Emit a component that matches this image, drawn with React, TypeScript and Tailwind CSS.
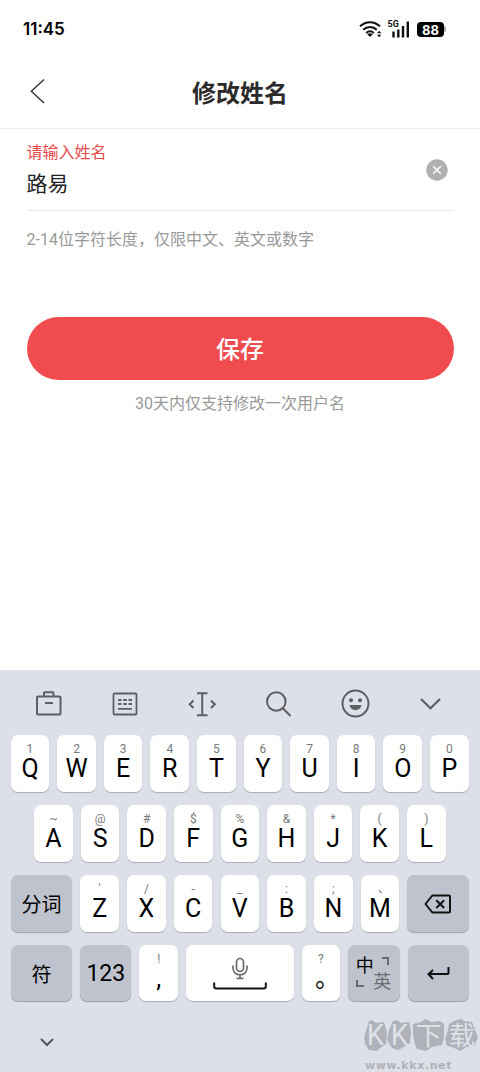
import type { ReactNode } from "react";

const letterRows = [
  [
    ["Q", "1"],
    ["W", "2"],
    ["E", "3"],
    ["R", "4"],
    ["T", "5"],
    ["Y", "6"],
    ["U", "7"],
    ["I", "8"],
    ["O", "9"],
    ["P", "0"],
  ],
  [
    ["A", "~"],
    ["S", "@"],
    ["D", "#"],
    ["F", "$"],
    ["G", "%"],
    ["H", "&"],
    ["J", "*"],
    ["K", "("],
    ["L", ")"],
  ],
  [
    ["Z", "'"],
    ["X", "/"],
    ["C", "-"],
    ["V", "_"],
    ["B", ":"],
    ["N", ";"],
    ["M", "、"],
  ],
];

function LetterKey({ main, sub }: { main: string; sub: string }) {
  return (
    <button className="flex h-[56.4px] w-[38.6px] shrink-0 flex-col items-center rounded-[7px] bg-white pt-[8px] shadow-[0_1px_1px_#a9acb8]">
      <span
        className={`h-3 text-[12px] leading-[12px] text-[#77787b] ${
          sub === "、" ? "pl-2" : ""
        }`}
      >
        {sub}
      </span>
      <span className="text-[25px] leading-[27px] text-black">{main}</span>
    </button>
  );
}

function FunctionKey({
  className,
  children,
}: {
  className: string;
  children: ReactNode;
}) {
  return (
    <button
      className={`flex h-[56.4px] shrink-0 items-center justify-center rounded-[7px] bg-[#bfc3cd] text-black shadow-[0_1px_1px_#9c9fb0] ${className}`}
    >
      {children}
    </button>
  );
}

function StatusBar() {
  return (
    <div className="flex h-14 items-center justify-between pt-[2px] pr-[34px] pl-[23px]">
      <span className="pt-px font-['Inter'] text-[17px] font-semibold text-black">
        11:45
      </span>
      <div className="flex items-center">
        <svg className="h-[18px] w-6" viewBox="0 0 24 18" fill="none">
          <g stroke="#111" strokeWidth="2">
            <path d="M1 6.3C7 .8 15 .8 21 6.3" />
            <path d="M4.2 9.7c4-3.7 9.6-3.7 13.6 0" />
            <path d="M7.2 12.9c2.3-2 5.3-2 7.6 0" />
          </g>
          <path d="M8.2 14.2c1.8-1.4 3.8-1.4 5.6 0L11 17z" fill="#111" />
          <path d="M18 13.2l2.2-2.4 2.2 2.4zM18 14.8l2.2 2.4 2.2-2.4z" fill="#111" />
        </svg>
        <svg className="-mt-px ml-[5px] h-[18px] w-[22px] overflow-visible" viewBox="0 0 22 18">
          <text
            x="-0.5"
            y="7"
            fontFamily="Roboto"
            fontSize="9"
            fontWeight="700"
            fill="#111"
          >
            5G
          </text>
          <path
            d="M5.5 11.5v6M10.3 9.5v8M15 6v11.5M19.8 1.5v16"
            stroke="#111"
            strokeWidth="2.4"
          />
        </svg>
        <div className="ml-[7px] flex h-[15px] w-[27px] items-center justify-center rounded-[4px] bg-black pt-px font-['Inter'] text-[13px] leading-[14px] font-bold text-white">
          88
        </div>
        <div className="h-[6px] w-[2px] rounded-r-full bg-[#aaa]" />
      </div>
    </div>
  );
}

function Toolbar() {
  return (
    <div className="flex h-[65.4px] items-center justify-between px-[34px] pt-[3px]">
      <svg className="size-[30px]" viewBox="0 0 30 30" fill="none" stroke="#5d5f63" strokeWidth="2">
        <rect x="3" y="7.5" width="23.5" height="18" rx="1" />
        <path d="M10 7V4.2q0-1 1-1h7.5q1 0 1 1V7M11 14h8" />
      </svg>
      <svg className="size-[30px]" viewBox="0 0 30 30" fill="none" stroke="#5d5f63" strokeWidth="1.8">
        <rect x="3.5" y="4.5" width="23" height="21" rx="1" />
        <path d="M8 11h3.5M13.3 11h3.5M18.5 11H22M8 15h3.5M13.3 15h3.5M18.5 15H22M8 19.8h14" />
      </svg>
      <svg className="size-[30px]" viewBox="0 0 30 30" fill="none" stroke="#5d5f63" strokeWidth="2">
        <path d="M10 4.2h10.5M10 26.2h10.5M15.25 4v22" />
        <path d="M6.5 11.5L2.7 15.3 6.5 19M24 11.5l3.800 3.800L24 19" />
      </svg>
      <svg className="size-[30px]" viewBox="0 0 30 30" fill="none" stroke="#5d5f63" strokeWidth="2">
        <circle cx="13.3" cy="12.5" r="9.3" />
        <path d="M19.8 19.3l7.7 7.7" />
      </svg>
      <svg className="size-[30px]" viewBox="0 0 30 30" fill="none">
        <circle cx="15.5" cy="14.6" r="13" stroke="#5d5f63" strokeWidth="2" />
        <g fill="#5d5f63">
          <circle cx="11" cy="11.3" r="2" />
          <circle cx="20" cy="11.3" r="2" />
          <path d="M9.5 16h12c-.5 3.3-3 5.2-6 5.2S10 19.3 9.5 16z" />
        </g>
      </svg>
      <svg className="size-[30px]" viewBox="0 0 30 30" fill="none" stroke="#5d5f63" strokeWidth="2.2">
        <path d="M5 10l9.500 9.300L24 10" />
      </svg>
    </div>
  );
}

function Keyboard() {
  return (
    <div className="relative h-[402px] bg-[#dde0e8]">
      <Toolbar />
      <div className="flex flex-col gap-[13.5px] pr-[11px] pl-[10.7px]">
        <div className="flex gap-2">
          {letterRows[0].map(([main, sub]) => (
            <LetterKey key={main} main={main} sub={sub} />
          ))}
        </div>
        <div className="flex justify-center gap-2">
          {letterRows[1].map(([main, sub]) => (
            <LetterKey key={main} main={main} sub={sub} />
          ))}
        </div>
        <div className="flex justify-between">
          <FunctionKey className="w-[61.5px] pt-[3px] text-[20px]">分词</FunctionKey>
          {letterRows[2].map(([main, sub]) => (
            <LetterKey key={main} main={main} sub={sub} />
          ))}
          <FunctionKey className="w-[61.5px] pt-px">
            <svg className="h-5 w-7" viewBox="0 0 28 20" fill="none" stroke="#111" strokeWidth="2">
              <path d="M8.3 1.5H25q1 0 1 1v15q0 1-1 1H8.3L1.5 10z" strokeLinejoin="round" />
              <path d="M12.300 6.200l7.800 7.800M20.100 6.200L12.300 14" />
            </svg>
          </FunctionKey>
        </div>
        <div className="flex gap-2">
          <FunctionKey className="w-[61.5px] pt-[3px] text-[20px]">符</FunctionKey>
          <FunctionKey className="w-[51.3px] pt-[2px] text-[23px]">123</FunctionKey>
          <LetterKey main="," sub="!" />
          <button className="flex h-[56.4px] flex-1 flex-col items-center rounded-[7px] bg-white pt-[11.5px] shadow-[0_1px_1px_#a9acb8]">
            <svg className="h-[34px] w-[54px]" viewBox="0 0 54 34" fill="none">
              <g stroke="#6a6b6e" strokeWidth="1.7">
                <rect x="23.5" y="1.5" width="7" height="13" rx="3.5" />
                <path d="M20 8.5v2.500c0 9 14 9 14 0V8.500M27 18v3.500M23.500 21.300h7" />
              </g>
              <path d="M1.200 25.500v4q0 2 2 2h47.600q2 0 2-2v-4" stroke="#111" strokeWidth="2" />
            </svg>
          </button>
          <button className="flex h-[56.4px] w-[38.6px] shrink-0 flex-col items-center rounded-[7px] bg-white pt-[8px] shadow-[0_1px_1px_#a9acb8]">
            <span className="h-3 text-[12px] leading-[12px] text-[#77787b]">?</span>
            <span className="pl-[13px] text-[25px] leading-[27px] text-black">。</span>
          </button>
          <FunctionKey className="w-[51.3px] pt-[2px]">
            <span className="grid w-[36px] grid-cols-2 grid-rows-2 text-[18px] leading-[16px]">
              <span>中</span>
              <svg className="-mt-px ml-2 size-2" viewBox="0 0 8 8" fill="none" stroke="#696c73" strokeWidth="2">
                <path d="M0 1h6v7" />
              </svg>
              <svg className="mt-[6px] size-2" viewBox="0 0 8 8" fill="none" stroke="#696c73" strokeWidth="2">
                <path d="M1 0v6h7" />
              </svg>
              <span className="-ml-px text-[#696c73]">英</span>
            </span>
          </FunctionKey>
          <FunctionKey className="w-[61.5px]">
            <svg className="h-4 w-6" viewBox="0 0 24 16" fill="none" stroke="#111" strokeWidth="2">
              <path d="M22.500 2v6q0 1-1 1H2M7 5L2.500 9 7 14" />
            </svg>
          </FunctionKey>
        </div>
      </div>
      <svg className="mt-[37px] ml-[40px] h-[9px] w-[14px]" viewBox="0 0 14 9" fill="none" stroke="#55575b" strokeWidth="2">
        <path d="M1 1l6 6 6-6" />
      </svg>
      <Watermark />
    </div>
  );
}

function Watermark() {
  return (
    <svg className="absolute right-0 bottom-0 h-[55px] w-[118px] overflow-visible" viewBox="0 0 118 55">
      <g fill="#b0b2b9">
        <path d="M7 4l3-1 4 3 8-1 3 10-1 12-6 4-3 3-8-1-4-6-1-7 2-6z" />
        <path d="M31 4l4-1 4 3 8-1 2 9-1 12-8 5-4 2-6-2-5-8 2-10z" />
        <path d="M51 7l8-2 5-3 5 3 9-1 4 3v13l-2 8-10 2-6 4-9-2-2-5-2-9z" />
        <path d="M87 7l7-4 5-1 4 2 7 1 4 10 2 6-4 8-8 1-5 4-9-4-5-1-2-7 3-9z" />
      </g>
      <g fill="#dfe1e8" fontFamily="Roboto, 'Noto Sans CJK SC', sans-serif">
        <text x="5" y="28" fontSize="29" textLength="17" lengthAdjust="spacingAndGlyphs">K</text>
        <text x="29" y="28" fontSize="29" textLength="17" lengthAdjust="spacingAndGlyphs">K</text>
        <text x="53.5" y="28" fontSize="26">下</text>
        <text x="87" y="27.5" fontSize="26">载</text>
      </g>
      <text
        x="3"
        y="52"
        fontFamily="'DejaVu Sans'"
        fontSize="11"
        fontWeight="700"
        letterSpacing="0.6"
        fill="#b0b2b9"
      >
        www.kkx.net
      </text>
    </svg>
  );
}

export default function App() {
  return (
    <div className="flex h-[1072px] w-[480px] flex-col overflow-hidden bg-white font-['Roboto','Noto_Sans_CJK_SC',sans-serif]">
      <StatusBar />
      <header className="grid h-[73px] grid-cols-[1fr_auto_1fr] items-center border-b border-[#ececec] px-[30px]">
        <button>
          <svg className="-mt-[2px] h-[26px] w-[15px]" viewBox="0 0 15 26" fill="none" stroke="#333" strokeWidth="1.4">
            <path d="M14 1.5L1.3 13.3 14 25" />
          </svg>
        </button>
        <h1 className="pt-[3px] text-[24px] font-bold text-[#2b2b2b]">修改姓名</h1>
      </header>

      <main className="flex-1 px-[26.5px]">
        <div className="flex h-[82px] items-center justify-between border-b border-[#e9e9e9] pr-[5.5px]">
          <div className="pt-[3px]">
            <p className="text-[16px] leading-[24px] text-[#e64a4d]">
              请输入姓名
            </p>
            <p className="pt-px text-[21px] leading-[36px] text-[#222]">路易</p>
          </div>
          <svg className="size-[22px]" viewBox="0 0 22 22">
            <circle cx="11" cy="11" r="10.7" fill="#b0b0b0" />
            <path d="M7.2 7.2l7.6 7.6M14.8 7.2l-7.6 7.6" stroke="#fff" strokeWidth="1.5" />
          </svg>
        </div>
        <p className="mt-[17px] text-[16px] leading-6 text-[#999]">
          2-14位字符长度，仅限中文、英文或数字
        </p>
        <button className="mt-[65px] flex h-[63px] w-full items-center justify-center rounded-full bg-[#f04c50] pt-[3px] text-[24px] font-medium text-white">
          保存
        </button>
        <p className="mt-[12px] text-center text-[16px] leading-6 text-[#999]">
          30天内仅支持修改一次用户名
        </p>
      </main>

      <Keyboard />
    </div>
  );
}
